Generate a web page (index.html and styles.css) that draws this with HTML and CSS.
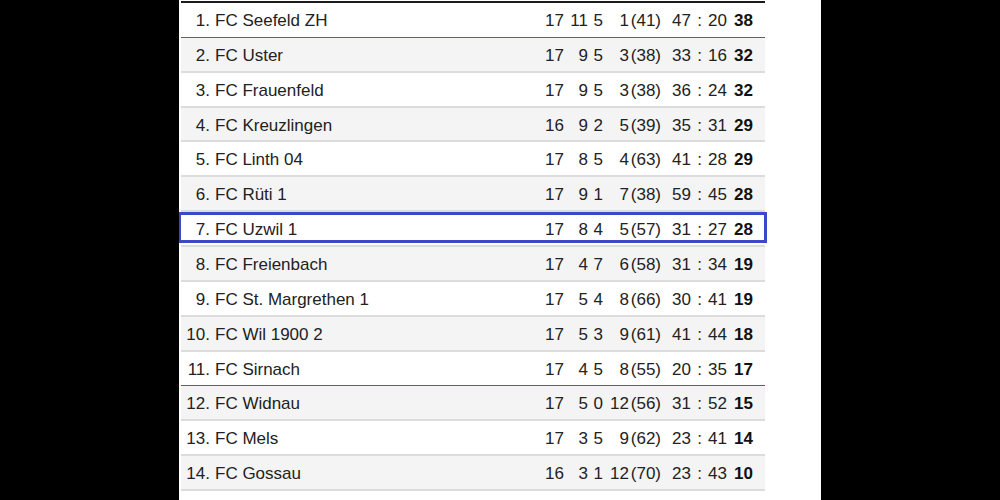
FILE: index.html
```html
<!DOCTYPE html>
<html lang="de">
<head>
<meta charset="utf-8">
<title>Tabelle</title>
<link rel="stylesheet" href="styles.css">
</head>
<body>
<div class="page">
  <div class="table">
    <div class="row promo"><span class="rank">1.</span><span class="name">FC Seefeld ZH</span><span class="c">17</span><span class="c">11</span><span class="c">5</span><span class="c">1</span><span class="c">(41)</span><span class="c">47</span><span class="colon">:</span><span class="c">20</span><b class="pts">38</b></div>
    <div class="row"><span class="rank">2.</span><span class="name">FC Uster</span><span class="c">17</span><span class="c">9</span><span class="c">5</span><span class="c">3</span><span class="c">(38)</span><span class="c">33</span><span class="colon">:</span><span class="c">16</span><b class="pts">32</b></div>
    <div class="row"><span class="rank">3.</span><span class="name">FC Frauenfeld</span><span class="c">17</span><span class="c">9</span><span class="c">5</span><span class="c">3</span><span class="c">(38)</span><span class="c">36</span><span class="colon">:</span><span class="c">24</span><b class="pts">32</b></div>
    <div class="row"><span class="rank">4.</span><span class="name">FC Kreuzlingen</span><span class="c">16</span><span class="c">9</span><span class="c">2</span><span class="c">5</span><span class="c">(39)</span><span class="c">35</span><span class="colon">:</span><span class="c">31</span><b class="pts">29</b></div>
    <div class="row"><span class="rank">5.</span><span class="name">FC Linth 04</span><span class="c">17</span><span class="c">8</span><span class="c">5</span><span class="c">4</span><span class="c">(63)</span><span class="c">41</span><span class="colon">:</span><span class="c">28</span><b class="pts">29</b></div>
    <div class="row"><span class="rank">6.</span><span class="name">FC Rüti 1</span><span class="c">17</span><span class="c">9</span><span class="c">1</span><span class="c">7</span><span class="c">(38)</span><span class="c">59</span><span class="colon">:</span><span class="c">45</span><b class="pts">28</b></div>
    <div class="row mine"><span class="rank">7.</span><span class="name">FC Uzwil 1</span><span class="c">17</span><span class="c">8</span><span class="c">4</span><span class="c">5</span><span class="c">(57)</span><span class="c">31</span><span class="colon">:</span><span class="c">27</span><b class="pts">28</b></div>
    <div class="row"><span class="rank">8.</span><span class="name">FC Freienbach</span><span class="c">17</span><span class="c">4</span><span class="c">7</span><span class="c">6</span><span class="c">(58)</span><span class="c">31</span><span class="colon">:</span><span class="c">34</span><b class="pts">19</b></div>
    <div class="row"><span class="rank">9.</span><span class="name">FC St. Margrethen 1</span><span class="c">17</span><span class="c">5</span><span class="c">4</span><span class="c">8</span><span class="c">(66)</span><span class="c">30</span><span class="colon">:</span><span class="c">41</span><b class="pts">19</b></div>
    <div class="row"><span class="rank">10.</span><span class="name">FC Wil 1900 2</span><span class="c">17</span><span class="c">5</span><span class="c">3</span><span class="c">9</span><span class="c">(61)</span><span class="c">41</span><span class="colon">:</span><span class="c">44</span><b class="pts">18</b></div>
    <div class="row releg"><span class="rank">11.</span><span class="name">FC Sirnach</span><span class="c">17</span><span class="c">4</span><span class="c">5</span><span class="c">8</span><span class="c">(55)</span><span class="c">20</span><span class="colon">:</span><span class="c">35</span><b class="pts">17</b></div>
    <div class="row"><span class="rank">12.</span><span class="name">FC Widnau</span><span class="c">17</span><span class="c">5</span><span class="c">0</span><span class="c">12</span><span class="c">(56)</span><span class="c">31</span><span class="colon">:</span><span class="c">52</span><b class="pts">15</b></div>
    <div class="row"><span class="rank">13.</span><span class="name">FC Mels</span><span class="c">17</span><span class="c">3</span><span class="c">5</span><span class="c">9</span><span class="c">(62)</span><span class="c">23</span><span class="colon">:</span><span class="c">41</span><b class="pts">14</b></div>
    <div class="row"><span class="rank">14.</span><span class="name">FC Gossau</span><span class="c">16</span><span class="c">3</span><span class="c">1</span><span class="c">12</span><span class="c">(70)</span><span class="c">23</span><span class="colon">:</span><span class="c">43</span><b class="pts">10</b></div>
  </div>
</div>
</body>
</html>
```

FILE: styles.css
```css
html, body {
  margin: 0;
  padding: 0;
  background: #000;
}

.page {
  margin-left: 179px;
  width: 642px;
  height: 500px;
  background: #fff;
  padding: 1px 0 0 2px;
  box-sizing: border-box;
  overflow: hidden;
}

.table {
  width: 584px;
  border-top: 2px solid #1a1a1a;
  font-family: "Liberation Sans", Arial, sans-serif;
  font-size: 17px;
  color: #222;
}

.row {
  display: grid;
  grid-template-columns: 29px 1fr 25px 24px 15px 26px 32px 30px 17px 18px 27px;
  align-items: center;
  height: 34.86px;
  box-sizing: border-box;
  padding: 3px 12px 0 0;
  border-bottom: 2px solid #dcdcdc;
  background: #fff;
}

.row:nth-child(even) {
  background: #f4f4f4;
}

.row.promo,
.row.releg {
  border-bottom: 1px solid #e02b26;
}

.rank {
  text-align: right;
}

.name {
  padding-left: 5px;
  white-space: nowrap;
}

.c {
  text-align: right;
}

.colon {
  text-align: center;
}

.pts {
  text-align: right;
  font-weight: bold;
  color: #111;
}

.row.mine {
  position: relative;
}

.row.mine::after {
  content: "";
  position: absolute;
  left: -3px;
  right: -2px;
  top: 0;
  bottom: 2px;
  border: 3px solid #3c48c9;
}
```
